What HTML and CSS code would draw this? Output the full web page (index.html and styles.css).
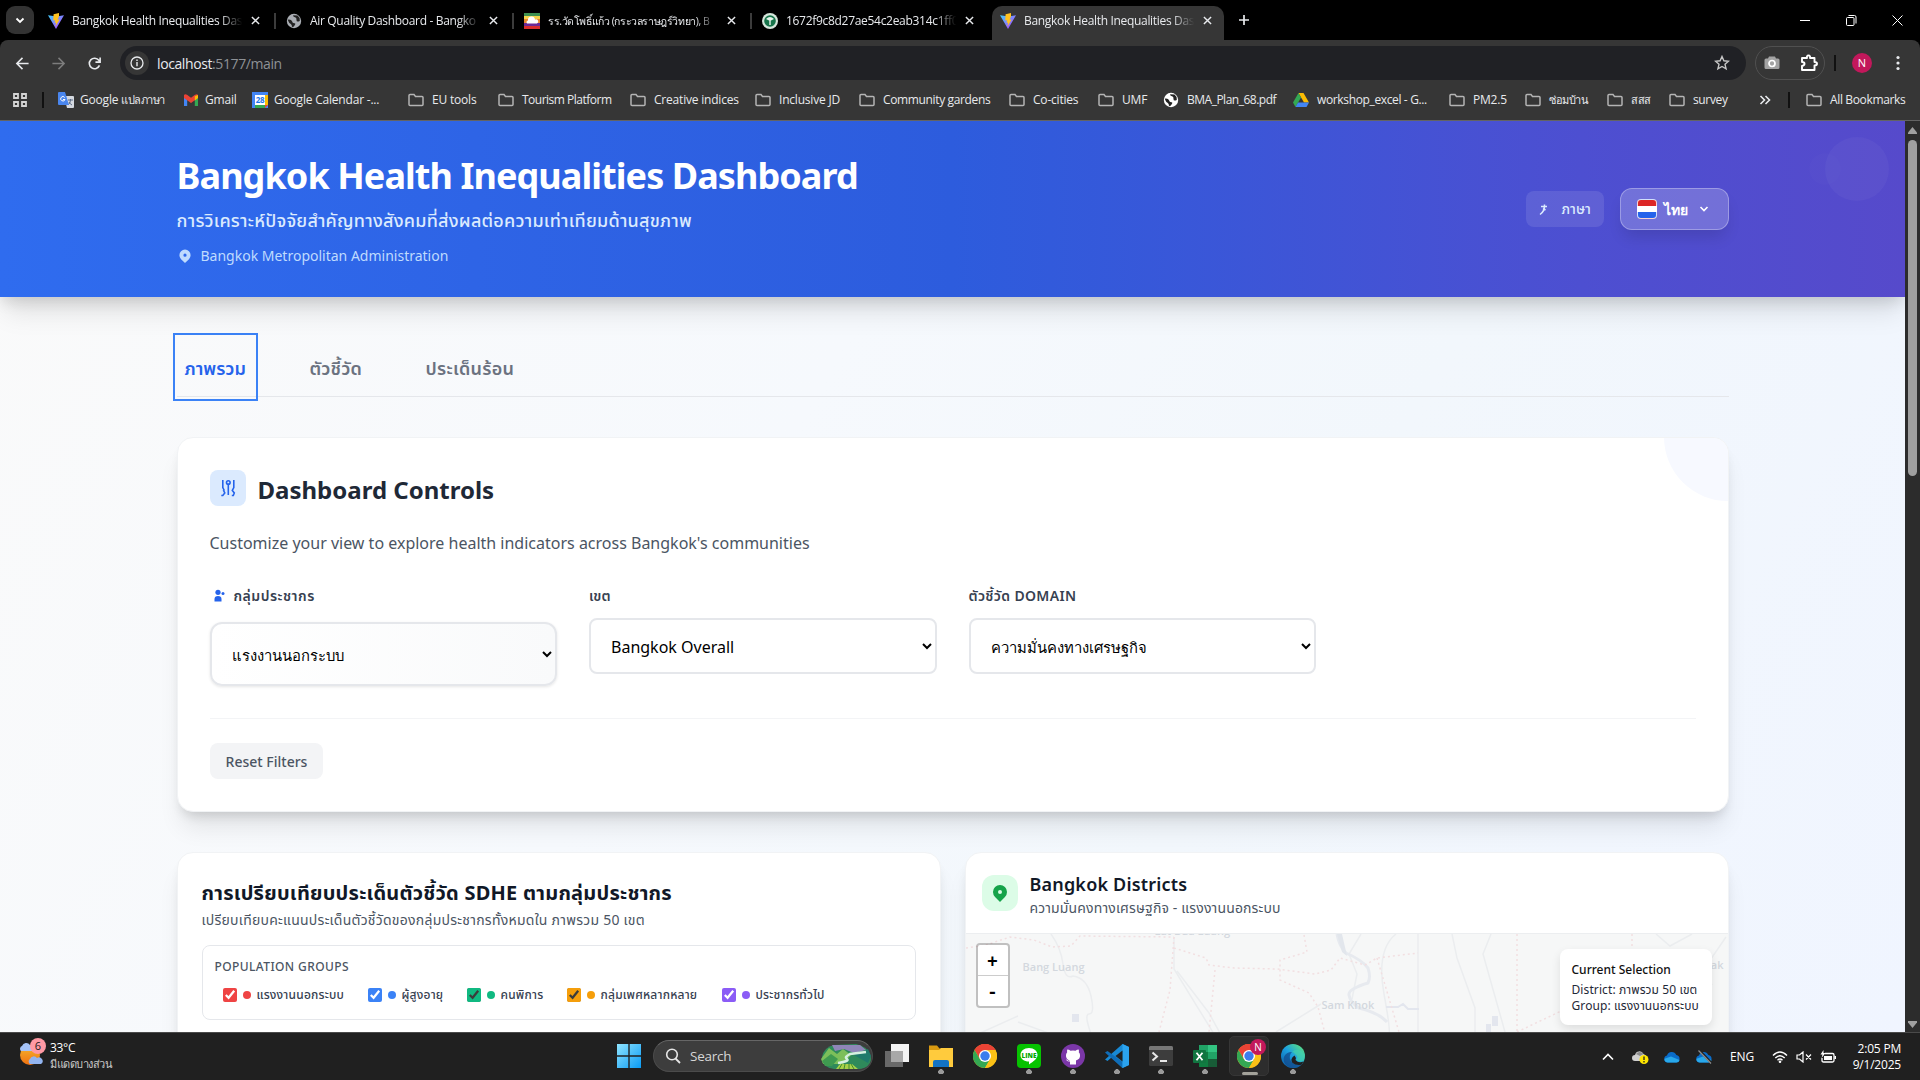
FILE: index.html
```html
<!DOCTYPE html>
<html lang="th">
<head>
<meta charset="utf-8">
<title>Bangkok Health Inequalities Dashboard</title>
<link rel="stylesheet" href="styles.css">
</head>
<body>
<svg class="defs" width="0" height="0">
  <defs>
    <linearGradient id="vite-a" x1="0" y1="0" x2="1" y2="1"><stop offset="0" stop-color="#41d1ff"/><stop offset="1" stop-color="#bd34fe"/></linearGradient>
    <linearGradient id="edge-a" x1="0" y1="1" x2="1" y2="0"><stop offset="0" stop-color="#0c59a4"/><stop offset=".5" stop-color="#1ba0e0"/><stop offset="1" stop-color="#66eb6e"/></linearGradient>
    <linearGradient id="win-a" x1="0" y1="0" x2="1" y2="1"><stop offset="0" stop-color="#8fe4ff"/><stop offset="1" stop-color="#0a9bf5"/></linearGradient>
    <linearGradient id="sun-a" x1="0" y1="0" x2="0" y2="1"><stop offset="0" stop-color="#f5b82e"/><stop offset="1" stop-color="#f07010"/></linearGradient>
    <symbol id="vite" viewBox="0 0 16 16"><path d="M0 2.2 8 16 16 2.2 8.5 3.6Z" fill="url(#vite-a)"/><path d="M11 0 5.6 1.2 5.2 7.6l2-.4-.6 2.8 1.5-.4L7.400 13.500l4.300-7.100-2.100.4L11 3.600Z" fill="#ffc21f"/></symbol>
    <symbol id="x" viewBox="0 0 10 10"><path d="M1 1l8 8M9 1 1 9" stroke="#e8eaed" stroke-width="1.6"/></symbol>
    <symbol id="folder" viewBox="0 0 16 16"><path d="M1 3.500Q1 2.500 2 2.500H6L7.500 4.500H14Q15 4.500 15 5.500V12.500Q15 13.500 14 13.500H2Q1 13.500 1 12.500Z" fill="none" stroke="#b4b4b4" stroke-width="1.500"/></symbol>
    <symbol id="globe" viewBox="0 0 16 16"><circle cx="8" cy="8" r="7.200" fill="currentColor"/><path d="M2.200 6.500Q5.500 6.200 6 8.300T8.500 10.200 7.600 13.800L6 14Q6 11.500 4.500 10.800T2 7.500ZM7 2.200Q7.300 4.200 9 4.300T10.500 7 13.800 8L13.600 5 11.500 2.600Z" fill="#222"/></symbol>
    <symbol id="chrome" viewBox="0 0 24 24"><circle cx="12" cy="12" r="12" fill="#fbc116"/><path d="M12 12 1.600 6A12 12 0 0 1 22.400 6Z" fill="#ea4335"/><path d="M12 6H22.400A12 12 0 0 0 1.600 6L6.800 15Z" fill="#ea4335"/><path d="M6.800 15 1.600 6A12 12 0 0 0 12 24L17.200 15Z" fill="#34a853"/><path d="M12 24A12 12 0 0 0 22.400 6H12l5.200 9Z" fill="#fbc116"/><circle cx="12" cy="12" r="6" fill="#fff"/><circle cx="12" cy="12" r="4.700" fill="#3b7ded"/></symbol>
    <symbol id="pin" viewBox="0 0 20 20"><path fill-rule="evenodd" d="M5.050 4.050a7 7 0 1 1 9.900 9.900L10 18.900l-4.950-4.950a7 7 0 0 1 0-9.900zM10 11a2 2 0 1 0 0-4 2 2 0 0 0 0 4z" fill="currentColor"/></symbol>
    <symbol id="cloud" viewBox="0 0 16 12"><path d="M3.500 11.500A3.500 3.500 0 0 1 3 4.600 5 5 0 0 1 12.300 4 3.800 3.800 0 0 1 12.500 11.500Z" fill="#0a6cc9"/><path d="M3.500 11.500Q0 11 .5 7.800L7 5.500 15.500 9Q15 11.500 12.500 11.500Z" fill="#28a8ea"/></symbol>
  </defs>
</svg>

<div class="tabstrip">
  <span class="tab-search"><svg width="10" height="10" viewBox="0 0 10 10"><path d="M1.500 3.500 5 7 8.500 3.500" fill="none" stroke="#fff" stroke-width="1.800"/></svg></span>
  <div class="tab first"><svg class="fav"><use href="#vite"/></svg><span class="tab-title">Bangkok Health Inequalities Das</span><svg class="close"><use href="#x"/></svg></div>
  <div class="tab"><svg class="fav grey"><use href="#globe"/></svg><span class="tab-title">Air Quality Dashboard - Bangko</span><svg class="close"><use href="#x"/></svg></div>
  <div class="tab"><svg class="fav" viewBox="0 0 16 16"><path fill="#3e9150" d="M0 0h16v3H0z"/><path fill="#f4d34b" d="M0 3h16v3H0z"/><path fill="#e9872f" d="M0 6h16v4H0z"/><path fill="#6d2a96" d="M0 10h16v3H0z"/><path fill="#d92e2e" d="M0 13h16v3H0z"/><path fill="#fff" d="M3 10.500a2 2 0 0 1 1-3 3.500 3.500 0 0 1 7-1 2.200 2.200 0 0 1 2 4z"/></svg><span class="tab-title thai-tab">รร.วัดโพธิ์แก้ว (กระวลราษฎร์วิทยา), B</span><svg class="close"><use href="#x"/></svg></div>
  <div class="tab last"><svg class="fav" viewBox="0 0 16 16"><circle cx="8" cy="8" r="8" fill="#d6e6dc"/><circle cx="8" cy="8" r="5.800" fill="#16744a"/><path d="M4 6q4-4 8 0L8 8zM7.300 7h1.400v5H7.300z" fill="#e8f4ec"/></svg><span class="tab-title hash">1672f9c8d27ae54c2eab314c1ff0</span><svg class="close"><use href="#x"/></svg></div>
  <div class="tab active"><svg class="fav"><use href="#vite"/></svg><span class="tab-title">Bangkok Health Inequalities Das</span><svg class="close"><use href="#x"/></svg></div>
  <svg class="newtab" width="12" height="12" viewBox="0 0 12 12"><path d="M6 1v10M1 6h10" stroke="#e8eaed" stroke-width="1.700"/></svg>
  <div class="winbtns">
    <svg width="11" height="11" viewBox="0 0 11 11"><path d="M0 5.500h10" stroke="#fff"/></svg>
    <svg width="11" height="11" viewBox="0 0 11 11"><path d="M.5 3.500q0-1 1-1H7q1 0 1 1V9.500q0 1-1 1H1.500q-1 0-1-1zM2.500 .5H8.500q1.500 0 1.500 1.500V8.500" fill="none" stroke="#fff"/></svg>
    <svg width="11" height="11" viewBox="0 0 11 11"><path d="M.5.5l10 10M10.500.5l-10 10" stroke="#fff"/></svg>
  </div>
</div>

<div class="toolbar">
  <svg class="nav" viewBox="0 0 16 16"><path d="M14.500 8H2M8 2 2 8l6 6" fill="none" stroke="#e8eaed" stroke-width="1.700"/></svg>
  <svg class="nav" viewBox="0 0 16 16"><path d="M1.500 8H14M8 2l6 6-6 6" fill="none" stroke="#7d7d7d" stroke-width="1.600"/></svg>
  <svg class="nav" viewBox="0 0 16 16"><path d="M13.300 10A5.600 5.600 0 1 1 12.600 4.600L14 6.200M14 1.500v5H9" fill="none" stroke="#e8eaed" stroke-width="1.700"/></svg>
  <div class="omnibox">
    <span class="info"><svg width="14" height="14" viewBox="0 0 14 14"><circle cx="7" cy="7" r="6" fill="none" stroke="#e8eaed" stroke-width="1.300"/><path d="M7 6v4.200M7 3.600v1.400" stroke="#e8eaed" stroke-width="1.400"/></svg></span>
    <span class="url">localhost<em>:5177/main</em></span>
    <svg class="star" width="16" height="16" viewBox="0 0 16 16"><path d="M8 1.500l1.900 4.300 4.600.4-3.500 3.100 1.100 4.600L8 11.500l-4.100 2.400L5 9.300 1.500 6.200l4.600-.4z" fill="none" stroke="#c7c7c7" stroke-width="1.400"/></svg>
  </div>
  <div class="extpill">
    <svg width="16" height="16" viewBox="0 0 16 16"><path d="M5 1.500h6l1 2h2q1.500 0 1.500 1.500v7.500q0 1.500-1.500 1.500H2Q.5 14 .5 12.500V5Q.5 3.500 2 3.500h2z" fill="#a3a3a3"/><circle cx="8" cy="8.500" r="3" fill="none" stroke="#fff" stroke-width="1.700"/></svg>
    <svg width="18" height="18" viewBox="0 0 18 18"><path d="M2 4h5Q6.500 1.500 8.500 1.500T10 4h4.500V8Q17 8 17 9.700T14.500 11.500V16H2V12Q4.500 11.500 4.500 9.800T2 8z" fill="none" stroke="#fff" stroke-width="1.900" stroke-linejoin="round"/></svg>
  </div>
  <i class="bar"></i>
  <span class="avatar">N</span>
  <svg class="dots" width="4" height="16" viewBox="0 0 4 16"><circle cx="2" cy="2.500" r="1.600"/><circle cx="2" cy="8" r="1.600"/><circle cx="2" cy="13.500" r="1.600"/></svg>
</div>

<div class="bookmarks">
  <svg class="apps" width="14" height="14" viewBox="0 0 14 14"><path d="M1 1h4v4H1zM9 1h4v4H9zM1 9h4v4H1zM9 9h4v4H9z" fill="none" stroke="#d5d5d5" stroke-width="1.800"/></svg>
  <i class="bar"></i>
  <span class="bm"><svg viewBox="0 0 16 16"><path d="M6 4h9q1 0 1 1v10q0 1-1 1H9z" fill="#d5d9e0"/><path d="M10 8h5M12.500 7v1q0 3-2.500 5M11 10q1 2 3 3" stroke="#5a6a85" fill="none"/><path d="M1 0h6l4 13H1q-1 0-1-1V1q0-1 1-1z" fill="#4a86ee"/><path d="M6.700 5.500A2.200 2.200 0 1 0 7 7.500H5" fill="none" stroke="#fff"/></svg><span class="bt">Google <span class="thai-bm">แปลภาษา</span></span></span>
  <span class="bm"><svg viewBox="0 0 16 16"><path d="M1 3.500h3.200V14H1z" fill="#4285f4"/><path d="M11.800 3.500H15V14h-3.200z" fill="#34a853"/><path d="M1 3q1-1.500 3-.2l4 3 4-3Q14 1.500 15 3v3L8 11 1 6z" fill="#ea4335"/><path d="M11.800 4.200 15 3v3l-3.200 2.400z" fill="#fbbc04"/></svg><span class="bt">Gmail</span></span>
  <span class="bm"><svg viewBox="0 0 16 16"><path d="M0 0h16v16H0z" fill="#4285f4"/><path d="M13 3h3v10h-3z" fill="#fbbc04"/><path d="M3 13h10v3H3z" fill="#34a853"/><path d="M13 13h3l-3 3z" fill="#ea4335"/><path d="M3 3h10v10H3z" fill="#fff"/><text x="8" y="11" font-size="8" text-anchor="middle" fill="#1a73e8" font-weight="700">28</text></svg><span class="bt">Google Calendar -...</span></span>
  <span class="bm"><svg><use href="#folder"/></svg><span class="bt">EU tools</span></span>
  <span class="bm"><svg><use href="#folder"/></svg><span class="bt tight">Tourism Platform</span></span>
  <span class="bm"><svg><use href="#folder"/></svg><span class="bt">Creative indices</span></span>
  <span class="bm"><svg><use href="#folder"/></svg><span class="bt">Inclusive JD</span></span>
  <span class="bm"><svg><use href="#folder"/></svg><span class="bt snug">Community gardens</span></span>
  <span class="bm"><svg><use href="#folder"/></svg><span class="bt">Co-cities</span></span>
  <span class="bm"><svg><use href="#folder"/></svg><span class="bt">UMF</span></span>
  <span class="bm"><svg class="white"><use href="#globe"/></svg><span class="bt tight">BMA_Plan_68.pdf</span></span>
  <span class="bm"><svg viewBox="0 0 16 16"><path d="M5.500 1h5L16 10.500h-5z" fill="#fbbc04"/><path d="M5.500 1 8 5.500 2.500 15 0 10.500z" fill="#34a853"/><path d="M5 10.500h11L13.500 15h-11z" fill="#4285f4"/></svg><span class="bt snug">workshop_excel - G...</span></span>
  <span class="bm"><svg><use href="#folder"/></svg><span class="bt">PM2.5</span></span>
  <span class="bm"><svg><use href="#folder"/></svg><span class="bt thai-bm">ซ่อมบ้าน</span></span>
  <span class="bm"><svg><use href="#folder"/></svg><span class="bt thai-bm">สสส</span></span>
  <span class="bm"><svg><use href="#folder"/></svg><span class="bt snug">survey</span></span>
  <svg class="more" width="12" height="10" viewBox="0 0 12 10"><path d="M1.500 1l4 4-4 4M6.500 1l4 4-4 4" fill="none" stroke="#e8eaed" stroke-width="1.600"/></svg>
  <i class="bar"></i>
  <span class="bm"><svg><use href="#folder"/></svg><span class="bt snug">All Bookmarks</span></span>
</div>

<div class="viewport">
  <div class="page">
    <header class="hero">
      <i class="orb big"></i><i class="orb small"></i>
      <div class="container hero-in">
        <div>
          <h1>Bangkok Health Inequalities Dashboard</h1>
          <p class="tagline">การวิเคราะห์ปัจจัยสำคัญทางสังคมที่ส่งผลต่อความเท่าเทียมด้านสุขภาพ</p>
          <p class="org"><svg width="16" height="16"><use href="#pin"/></svg>Bangkok Metropolitan Administration</p>
        </div>
        <div class="lang">
          <span class="lang-label"><svg width="16" height="16" viewBox="0 0 16 16"><path d="M5 4.500h6M8.500 2.500Q9 9 4 12.500M7 6.500l2.500 1.500" fill="none" stroke="currentColor" stroke-width="1.500"/></svg><span>ภาษา</span></span>
          <button class="lang-btn"><i class="flag"></i><span class="t-thai">ไทย</span><svg width="10" height="8" viewBox="0 0 10 8"><path d="M1.500 2 5 5.500 8.500 2" fill="none" stroke="#fff" stroke-width="1.600"/></svg></button>
        </div>
      </div>
    </header>

    <main class="container">
      <nav class="tabs">
        <a class="on">ภาพรวม</a><a>ตัวชี้วัด</a><a>ประเด็นร้อน</a>
      </nav>

      <section class="card controls">
        <i class="corner"></i>
        <div class="controls-head">
          <span class="badge blue"><svg width="20" height="20" viewBox="0 0 20 20"><g fill="none" stroke="#2563eb" stroke-width="1.600"><path d="M4.500 2v7.500l1.500 3M3 17.500h1.500l2-2.500-1.500-3M10 5.500V17M15.500 2v7.500l-1.500 3 2 2.500-1 2.500h-1.500" transform="translate(.3 0)"/><circle cx="10.300" cy="4.500" r="1.800"/></g></svg></span>
          <h2>Dashboard Controls</h2>
        </div>
        <p class="lead">Customize your view to explore health indicators across Bangkok's communities</p>
        <div class="fields">
          <div class="field">
            <label class="with-icon"><svg width="16" height="16" viewBox="0 0 16 16"><path d="M4.500 13.500V11q0-3 3.500-3t3.500 3v2.500z" fill="#2563eb"/><circle cx="8" cy="4.300" r="2.600" fill="#2563eb"/><circle cx="13" cy="5.500" r="1.500" fill="#2563eb"/></svg><span class="group-label">กลุ่มประชากร</span></label>
            <select class="tall thai"><option>แรงงานนอกระบบ</option></select>
          </div>
          <div class="field"><label>เขต</label><select><option>Bangkok Overall</option></select></div>
          <div class="field"><label class="domain">ตัวชี้วัด DOMAIN</label><select class="thai"><option>ความมั่นคงทางเศรษฐกิจ</option></select></div>
        </div>
        <div class="controls-foot"><button class="reset">Reset Filters</button></div>
      </section>

      <div class="duo">
        <section class="card compare">
          <h3>การเปรียบเทียบประเด็นตัวชี้วัด SDHE ตามกลุ่มประชากร</h3>
          <p class="sub">เปรียบเทียบคะแนนประเด็นตัวชี้วัดของกลุ่มประชากรทั้งหมดใน ภาพรวม 50 เขต</p>
          <div class="groups">
            <h4>POPULATION GROUPS</h4>
            <div class="checks">
              <label class="c-red"><input type="checkbox" checked><i></i><span>แรงงานนอกระบบ</span></label>
              <label class="c-blue"><input type="checkbox" checked><i></i><span>ผู้สูงอายุ</span></label>
              <label class="c-green"><input type="checkbox" checked><i></i><span>คนพิการ</span></label>
              <label class="c-amber"><input type="checkbox" checked><i></i><span>กลุ่มเพศหลากหลาย</span></label>
              <label class="c-violet"><input type="checkbox" checked><i></i><span>ประชากรทั่วไป</span></label>
            </div>
          </div>
        </section>

        <section class="card districts">
          <div class="districts-head">
            <span class="badge green"><svg width="20" height="20"><use href="#pin"/></svg></span>
            <div><h3>Bangkok Districts</h3><p>ความมั่นคงทางเศรษฐกิจ - แรงงานนอกระบบ</p></div>
          </div>
          <div class="map">
            <svg class="tiles" width="762" height="300" viewBox="0 0 762 300">
              <g fill="none" stroke="#ebedef" stroke-width="1.500">
                <path d="M85 0q10 14 12 30t10 12q14 2 18 20t-2 18 5 28M211 37l32 42 12 22M208 3v32l40 65M310 98l45-28M52 88l55 20M12 100l40-18M395 0l-12 20 8 20-5 25M430 0q-20 16-12 60t4 40M452 0v100M486 0l5 24 18 50v24M525 0l-8 20 22 78M690 0l14 12 22-12M760 3l-22 32 8 16"/>
              </g>
              <path d="M371 0q2 12 9 19 16 7 22 15 3 9 0 15-20 6-19 12 1 7 10 13 20 5 28 14" fill="none" stroke="#e7eaef" stroke-width="3"/>
              <path d="M371 0l5 0 5 22-5-4z" fill="#e2e6ec"/>
              <path d="M420 73h12l5-3 5 5h11" fill="none" stroke="#e3e6ee" stroke-width="2"/>
              <path d="M526 82h6v10h-6zM520 90h5v8h-5zM106 80h7v8h-7z" fill="#e3e6ee"/>
              <g fill="none" stroke="#f2dfe1" stroke-width="1.500" stroke-dasharray="2 3">
                <path d="M0 14l20-3 24-8 24 3 18 7 19-1 9-10 94 1M208 14l32 10 3 7 25 3 43 1 38 5 16-4 9-12 25 7 12-7 41-5M208 3l-4 53-11 42M338 1l3 17-27 8v20l29 13 9 14 8 30M249 36l-6 62M411 24l22 74M551 0v98M666 0v20M551 98l42-20 60-8"/>
              </g>
            </svg>
            <span class="place p1">Lat Bua Luang</span><span class="place p2">Bang Luang</span><span class="place p3">Sam Khok</span><span class="place p4">ak</span>
            <div class="zoom"><b>+</b><b>-</b></div>
            <div class="selection"><strong>Current Selection</strong><span>District: ภาพรวม 50 เขต</span><span>Group: แรงงานนอกระบบ</span></div>
          </div>
        </section>
      </div>
    </main>
  </div>
  <div class="scrollbar">
    <svg width="9" height="7" viewBox="0 0 9 7"><path d="M4.500 0 9 5.500V7H0V5.500Z" fill="#9f9f9f"/></svg>
    <i></i>
    <svg class="down" width="9" height="7" viewBox="0 0 9 7"><path d="M4.500 7 9 1.500V0H0V1.500Z" fill="#9f9f9f"/></svg>
  </div>
</div>

<footer class="taskbar">
  <div class="weather">
    <span class="wx"><svg width="26" height="30" viewBox="0 0 26 30"><circle cx="12" cy="17" r="10" fill="url(#sun-a)"/><path d="M3 13a3 3 0 0 1 1-5 4.500 4.500 0 0 1 8-1 4 4 0 0 1 3 6z" fill="#a5c3f7"/><path d="M12 26a3 3 0 0 1 0-5 4 4 0 0 1 7-1 3.500 3.500 0 0 1 4 6z" fill="#92b4f0"/></svg><b>6</b></span>
    <div><p>33°C</p><p class="cond">มีแดดบางส่วน</p></div>
  </div>
  <div class="apps-row">
    <svg class="app" viewBox="0 0 24 24"><path d="M0 0h11.300v11.300H0zM12.700 0H24v11.300H12.700zM0 12.700h11.300V24H0zM12.700 12.700H24V24H12.700z" fill="url(#win-a)"/></svg>
    <div class="search"><svg width="16" height="16" viewBox="0 0 16 16"><circle cx="7" cy="6.500" r="5.300" fill="none" stroke="#e6e6e6" stroke-width="1.600"/><path d="M10.500 10.500 15 15" stroke="#e6e6e6" stroke-width="1.800"/></svg><span>Search</span>
      <svg class="art" width="52" height="26" viewBox="0 0 52 26"><path d="M2 14Q4 4 14 2l22-1q10 2 14 10 2 4 0 10-2 4-8 5H14Q3 25 2 14z" fill="#2f8a5b"/><path d="M12 2h28l6 5-12 3-10-4-9 2z" fill="#8f86b8"/><path d="M1 16 9 5l8 6 6-5 8 6-8 9H3z" fill="#7cbf5a"/><path d="M2 18l9-7 7 5-6 7H5z" fill="#3f9a50"/><path d="M48 6 34 12l14 8 3-7z" fill="#1f7a6b"/><path d="M46 9 30 11q-6 3-3 5t-9 4" fill="none" stroke="#d5f0e0" stroke-width="2.500"/><path d="M16 26l4-5h12l6 5z" fill="#a8d14a"/><path d="M19 26l3-5M24 26l1-5M29 26v-5M34 26l-3-5" stroke="#3f8a2f"/></svg>
    </div>
    <svg class="app" viewBox="0 0 24 24"><path d="M6 0h18v18H6z" fill="#f2f2f2"/><path d="M0 7h18v16H0z" fill="#777" opacity=".85"/><path d="M6 7h12v11H6z" fill="#a8a8a8"/></svg>
    <svg class="app run" viewBox="0 0 24 24"><path d="M0 1.500h8l2.500 3H24V8H0z" fill="#d99a11"/><path d="M0 6h10l2-2h12v19H0z" fill="#ffcb3d"/><path d="M4 23v-5q0-2 2-2h12q2 0 2 2v5z" fill="#1373c4"/></svg>
    <svg class="app" viewBox="0 0 24 24"><use href="#chrome"/></svg>
    <svg class="app run" viewBox="0 0 24 24"><rect width="24" height="24" rx="4" fill="#06c300"/><path d="M12 4c5 0 8.500 3 8.500 7 0 3.500-4 6.500-8.500 9.500v-3C7 17.500 3.500 15 3.500 11S7 4 12 4z" fill="#fff"/><text x="12" y="13.500" text-anchor="middle" font-size="6.500" font-weight="800" fill="#06a800">LINE</text></svg>
    <svg class="app run" viewBox="0 0 24 24"><circle cx="12" cy="12" r="12" fill="#7b37a8"/><path d="M9 20.500v-3q-3 .6-4-2 1.500 0 2 1.200H9Q4.500 15 5 11q.2-1.500 1.200-2.700Q5.800 7 6.300 5.500 8 5.600 9.500 6.700q2.500-.6 5 0Q16 5.600 17.700 5.500q.5 1.500.1 2.800Q19 9.500 19 11q.5 4-4 5.500v4z" fill="#fff"/></svg>
    <svg class="app run" viewBox="0 0 24 24"><path d="M17.500 0 24 3v18l-6.500 3L6.500 13.500 2.500 17 0 15.500 17.500 0z" fill="#1889d4"/><path d="M17.500 24 0 8.500 2.500 7 17.500 18z" fill="#0f6db8"/><path d="M17.500 0 24 3v18l-6.500 3z" fill="#2ba3ef"/><path d="M17.500 6.500v11L10.500 12z" fill="#202020"/></svg>
    <svg class="app run" viewBox="0 0 24 24"><rect y="2" width="24" height="20" rx="1.500" fill="#3d3d3d"/><path d="M0 3.500Q0 2 1.500 2h21Q24 2 24 3.500V6H0z" fill="#777"/><path d="M3.500 8.500 8 12.500l-4.500 4M11 17h7" fill="none" stroke="#e8e8e8" stroke-width="2"/></svg>
    <svg class="app run" viewBox="0 0 24 24"><path d="M6 1h18v22H6z" fill="#21a366"/><path d="M15 1h9v7h-9z" fill="#33c481"/><path d="M6 8h9v7H6zM15 15h9v8H6v-8z" fill="#107c41"/><path d="M15 15h9v8H15z" fill="#185c37"/><rect y="6" width="13" height="13" rx="1" fill="#117540"/><path d="M3.500 8.800l6 7.400M9.500 8.800l-6 7.400" stroke="#fff" stroke-width="1.800"/></svg>
    <span class="app-active"><svg class="app" viewBox="0 0 24 24"><use href="#chrome"/></svg><b>N</b></span>
    <svg class="app run" viewBox="0 0 24 24"><circle cx="12" cy="12" r="12" fill="url(#edge-a)"/><path d="M11 24C5 23 1.500 18 3 13q2-5 8-5-3 3-2 7 1.500 5 8 5.500 3 0 4.500-1Q18 24 11 24z" fill="#114a8b" opacity=".75"/><path d="M14 10q4 2 1 6 4 3 8 0 2-6-3-9-5-3-9 1 2 0 3 2z" fill="#45d6a8" opacity=".6"/><path d="M13.500 11.500q2 2 1 4.500 3 3.500 8 1.500l-2 3.200q-5 1.300-9-1.700-3-4 2-7.500z" fill="#202020"/></svg>
  </div>
  <div class="tray">
    <svg width="12" height="8" viewBox="0 0 12 8"><path d="M1 6.500 6 1.500l5 5" fill="none" stroke="#fff" stroke-width="1.600"/></svg>
    <svg width="17" height="14" viewBox="0 0 17 14"><path d="M3 11a3 3 0 0 1 0-6 4.500 4.500 0 0 1 8.500-1q3 1 3 4t-3 3z" fill="#d0d0d0"/><path d="M4 4a4.500 4.500 0 0 1 7.500 0L8 6z" fill="#8b8b8b"/><circle cx="12" cy="9.500" r="4.500" fill="#ffe600"/><path d="M12 6.500v3.500M12 11v1.500" stroke="#222" stroke-width="1.300"/></svg>
    <svg width="16" height="12"><use href="#cloud"/></svg>
    <svg width="17" height="14" viewBox="0 0 17 14"><use href="#cloud" width="16" height="12" y="1"/><path d="M3 0l12.500 13" stroke="#202020" stroke-width="2.500"/><path d="M2.500.5 15 13.500" stroke="#8f8f8f" stroke-width="1.200"/></svg>
    <span class="eng">ENG</span>
    <svg class="wifi" width="16" height="12" viewBox="0 0 16 12"><g fill="none" stroke="#fff" stroke-width="1.400"><path d="M1 4.500q7-7 14 0M3.300 7q4.700-4.600 9.400 0M5.500 9.300q2.500-2.500 5 0"/></g><circle cx="8" cy="10.700" r="1.300" fill="#fff"/></svg>
    <svg width="16" height="12" viewBox="0 0 16 12"><path d="M1 4h2.500L7 1v10L3.500 8H1zM10 3.500l5 5M15 3.500l-5 5" fill="none" stroke="#fff" stroke-width="1.200"/></svg>
    <svg width="16" height="14" viewBox="0 0 16 14"><path d="M5 3.500h7.500Q14 3.500 14 5v5.500Q14 12 12.500 12h-9Q2 12 2 10.500V8" fill="none" stroke="#fff" stroke-width="1.300"/><path d="M4 6h8v4H4zM14.500 6h1.500v3h-1.500z" fill="#fff"/><path d="M3.500 0 .5 4.500H2.500L1.500 8l4-5H3.500z" fill="#fff"/></svg>
    <div class="clock"><p>2:05 PM</p><p>9/1/2025</p></div>
  </div>
</footer>
</body>
</html>
```

FILE: styles.css
```css
* { box-sizing: border-box; }
body {
  margin: 0; width: 1920px; height: 1080px; overflow: hidden;
  display: flex; flex-direction: column; background: #000;
  font-family: "Noto Sans", "Noto Sans Thai", "Open Sans", sans-serif;
}
h1, h2, h3, h4, p { margin: 0; }
svg { display: block; flex: none; }
.defs { position: absolute; }
i { font-style: normal; }

/* ---- browser tabs ---- */
.tabstrip { height: 40px; flex: none; display: flex; align-items: center; color: #e8eaed; font: 12px "Open Sans", sans-serif; padding-left: 6px; }
.tab-search { width: 28px; height: 28px; border-radius: 9px; background: #333; display: grid; place-items: center; }
.tab { flex: none; width: 238px; height: 34px; display: flex; align-items: center; padding: 1px 0 0 10px; position: relative; }
.tab::after { content: ""; position: absolute; right: 0; top: 10px; width: 2px; height: 16px; background: #3c3c3c; }
.tab.first { margin-left: 10px; width: 232px; padding-left: 4px; }
.tab.last::after, .tab.active::after { display: none; }
.tab.last { width: 236px; }
.tab.active { width: 232px; margin: 6px 14px 0 4px; padding: 0 0 5px 8px; background: #363636; border-radius: 10px 10px 0 0; }
.fav { width: 16px; height: 16px; }
.fav.grey { color: #a9adb3; }
.tab-title { width: 172px; margin-left: 8px; white-space: nowrap; overflow: hidden; letter-spacing: -.32px; line-height: 20px;
  -webkit-mask-image: linear-gradient(90deg, #000 86%, transparent 99%); mask-image: linear-gradient(90deg, #000 86%, transparent 99%); }
.thai-tab { font-size: 10.5px; letter-spacing: -.4px; }
.hash { letter-spacing: -.3px; }
.close { width: 9px; height: 9px; margin-left: 7px; }
.winbtns { margin-left: auto; display: flex; gap: 35px; padding-right: 17px; }

/* ---- toolbar ---- */
.toolbar { height: 46px; flex: none; display: flex; align-items: center; background: #363636; border-radius: 8px 8px 0 0; padding-left: 15px; }
.nav { width: 15px; height: 15px; margin-right: 21px; }
.omnibox { width: 1626px; height: 34px; border-radius: 17px; background: #202125; display: flex; align-items: center; margin-left: -3px; padding: 0 16px 0 5px; flex: none; }
.info { width: 24px; height: 24px; border-radius: 50%; background: #363636; display: grid; place-items: center; }
.url { font: 14px "Open Sans", sans-serif; color: #e8eaed; margin-left: 8px; letter-spacing: -.4px; }
.url em { font-style: normal; color: #8e9196; }
.star { margin-left: auto; }
.extpill { width: 70px; height: 34px; border: 1px solid #505050; border-radius: 17px; margin-left: 9px; display: flex; align-items: center; justify-content: space-between; padding: 0 6px 0 8px; flex: none; }
.bar { width: 2px; height: 16px; background: #111; display: block; }
.toolbar .bar { margin-left: 9px; }
.avatar { width: 20px; height: 20px; border-radius: 50%; background: #c2185b; color: #fff; font: 11px/20px "Open Sans", sans-serif; text-align: center; margin-left: 16px; }
.dots { fill: #e8eaed; margin-left: 24px; }

/* ---- bookmarks ---- */
.bookmarks { height: 35px; flex: none; display: grid; align-items: center; background: #363636; border-bottom: 1px solid #636363; padding: 0 0 7px 13px;
  grid-template-columns: 29px 16px 125px 69px 156px 90px 132px 125px 104px 150px 89px 65px 130px 156px 76px 82px 62px 90px 29px 18px 110px; }
.bm { display: flex; align-items: center; gap: 8px; color: #e8eaed; font: 12px/18px "Open Sans", sans-serif; letter-spacing: -.2px; white-space: nowrap; }
.bm svg { width: 16px; height: 16px; }
.bm .white { color: #fff; }
.bm:nth-of-type(-n+3) { gap: 6px; }
.tight { letter-spacing: -.5px; }
.snug { letter-spacing: -.36px; }
.thai-bm { font-size: 11px; letter-spacing: -.5px; }

/* ---- page ---- */
.viewport { flex: 1; min-height: 0; display: flex; }
.page { width: 1905px; overflow: hidden; background: linear-gradient(120deg, #fafafa 0%, #f6f9fd 40%, #f2f7fc 65%, #f0f5ff 100%); }
.container { width: 1600px; margin: 0 auto; padding: 0 24px; }
.hero { height: 176px; position: relative; color: #fff; background: linear-gradient(90deg, #2f6cef 0%, #2d5cdd 50%, #4d4fd1 83%, #564acb 100%); box-shadow: 0 20px 25px -5px rgba(0,0,0,.1), 0 6px 14px -2px rgba(0,0,0,.13); }
.orb { position: absolute; border-radius: 50%; background: rgba(255,255,255,.035); }
.orb.big { width: 64px; height: 64px; right: 16px; top: 16px; }
.orb.small { width: 32px; height: 32px; right: 64px; top: 32px; background: rgba(255,255,255,.012); }
.hero-in { height: 100%; display: flex; justify-content: space-between; align-items: center; }
h1 { font-size: 36px; line-height: 40px; font-weight: 700; letter-spacing: -.93px; margin-top: 4px; }
.tagline { font-size: 18px; line-height: 28px; font-weight: 500; color: #dbeafe; margin-top: 10px; letter-spacing: .24px; white-space: nowrap; }
.org { display: flex; align-items: center; gap: 8px; font-size: 14px; line-height: 20px; color: #bfdbfe; margin-top: 12px; }
.lang { display: flex; align-items: center; gap: 16px; }
.lang-label { width: 78px; height: 36px; border-radius: 8px; background: rgba(255,255,255,.1); color: #dbeafe; display: flex; align-items: center; gap: 10px; padding: 1px 0 0 10px; font-size: 14px; font-weight: 500; white-space: nowrap; }
.lang-btn { width: 109px; height: 42px; border: 1px solid rgba(255,255,255,.3); border-radius: 12px; background: rgba(255,255,255,.2); color: #fff; font: 600 14px "Noto Sans", sans-serif; display: flex; align-items: center; padding: 0 0 0 16px; box-shadow: 0 10px 15px -3px rgba(0,0,0,.12); }
.flag { width: 20px; height: 20px; border: 1px solid rgba(255,255,255,.8); border-radius: 4px; background: linear-gradient(#dc2626 33%, #fff 33% 66%, #2563eb 66%); margin-right: 7px; }
.t-thai { width: 25px; padding-top: 1px; white-space: nowrap; }
.lang-btn svg { margin-left: 10px; }

.tabs { height: 60px; margin-top: 40px; border-bottom: 1px solid #e5e7eb; display: flex; gap: 48px; }
.tabs a { height: 60px; padding: 0 8px; font-size: 18px; line-height: 62px; font-weight: 600; color: #6b7280; white-space: nowrap; }
.tabs .on { color: #2563eb; outline: 2px solid #3b82f6; outline-offset: 2px; width: 77px; }
.tabs a:nth-child(2) { width: 68px; letter-spacing: .15px; }
.tabs a:nth-child(3) { letter-spacing: .3px; }

.card { background: #fff; border: 1px solid #f1f3f5; border-radius: 16px; box-shadow: 0 20px 25px -5px rgba(0,0,0,.09), 0 8px 12px -5px rgba(0,0,0,.14); }
.controls { margin-top: 40px; height: 375px; padding: 32px 32px 0; position: relative; overflow: hidden; }
.corner { position: absolute; width: 128px; height: 128px; right: -64px; top: -65px; border-radius: 50%; background: #f7f9ff; }
.controls-head { display: flex; gap: 12px; height: 44px; }
.badge { width: 36px; height: 36px; display: grid; place-items: center; flex: none; }
.badge.blue { background: #dbeafe; border-radius: 8px; }
.badge.green { background: #dcfce7; border-radius: 12px; color: #16a34a; }
h2 { font-size: 24px; line-height: 32px; color: #1f2937; padding-top: 4px; }
.lead { font-size: 16px; line-height: 26px; color: #4b5563; padding-top: 16px; }
.fields { display: grid; grid-template-columns: repeat(4, 1fr); gap: 32px; margin-top: 30px; }
.field label { display: flex; align-items: center; height: 20px; font-size: 14px; font-weight: 600; color: #374151; letter-spacing: .1px; white-space: nowrap; }
.field .with-icon { gap: 8px; }
.group-label { letter-spacing: .5px; }
.field .domain { letter-spacing: .35px; }
.field select { display: block; width: 100%; height: 56px; margin-top: 12px; border: 2px solid #e5e7eb; border-radius: 8px; background: #fff; color: #000; padding: 2px 16px 0; font: 16px "Noto Sans", sans-serif; }
.field select.thai { font-size: 14.8px; }
.field select.tall { height: 64px; margin-top: 16px; border-radius: 12px; background: linear-gradient(90deg, #fff, #f9fafb); font-weight: 500; box-shadow: 0 1px 3px rgba(0,0,0,.1); }
.controls-foot { border-top: 1px solid #f3f4f6; margin-top: 32px; padding-top: 24px; }
.reset { width: 113px; height: 36px; border: 0; border-radius: 8px; background: #f3f4f6; color: #4b5563; font: 500 14px "Noto Sans", sans-serif; padding: 0 0 0 1px; display: block; white-space: nowrap; }

.duo { display: grid; grid-template-columns: 1fr 1fr; gap: 24px; margin-top: 40px; }
.duo .card { height: 400px; overflow: hidden; }
.compare { padding: 24px; }
.compare h3 { font-size: 20px; line-height: 32px; font-weight: 700; color: #111827; letter-spacing: .24px; white-space: nowrap; }
.sub { font-size: 14px; line-height: 20px; color: #4b5563; margin-top: 1px; letter-spacing: .25px; white-space: nowrap; }
.groups { margin-top: 15px; height: 75px; border: 1px solid #e5e7eb; border-radius: 8px; padding: 11px 12px; }
h4 { font-size: 12px; line-height: 20px; font-weight: 500; color: #4b5563; letter-spacing: .4px; }
.checks { display: flex; margin-top: 8px; padding-left: 8px; }
.checks label { display: flex; align-items: center; height: 20px; font-size: 12px; font-weight: 500; color: #374151; letter-spacing: .2px; white-space: nowrap; }
.checks input { width: 14px; height: 14px; margin: 0 6px 0 0; accent-color: var(--c); }
.checks i { width: 8px; height: 8px; border-radius: 50%; background: var(--c); margin-right: 6px; }
.c-red { --c: #ef4444; width: 145px; }
.c-blue { --c: #3b82f6; width: 99px; }
.c-green { --c: #10b981; width: 100px; }
.c-amber { --c: #f59e0b; width: 155px; }
.c-violet { --c: #8b5cf6; }

.districts-head { height: 81px; display: flex; gap: 12px; padding: 22px 0 0 16px; border-bottom: 1px solid #eceef0; }
.districts-head h3 { font-size: 18px; line-height: 22px; font-weight: 600; color: #111827; margin-top: -2px; letter-spacing: .18px; }
.districts-head p { font-size: 14px; line-height: 20px; color: #4b5563; margin-top: 3px; letter-spacing: .15px; white-space: nowrap; }
.map { height: 300px; position: relative; background: #f6f7f7; overflow: hidden; }
.tiles { position: absolute; left: 0; top: 0; }
.place { position: absolute; font: 600 11px/14px "Open Sans", sans-serif; color: #d3d8de; white-space: nowrap; }
.p1 { left: 189px; top: -10px; }
.p2 { left: 57px; top: 26px; }
.p3 { left: 356px; top: 64px; }
.p4 { right: 4px; top: 24px; }
.zoom { position: absolute; left: 10px; top: 9px; width: 34px; height: 65px; border: 2px solid rgba(0,0,0,.22); border-radius: 4px; background: #fff; background-clip: padding-box; }
.zoom b { display: block; height: 30px; font: bold 18px/35px "Liberation Mono", monospace; text-align: center; color: #000; }
.zoom b + b { border-top: 1px solid #ccc; }
.selection { position: absolute; right: 16px; top: 15px; width: 152px; height: 76px; background: #fff; border-radius: 8px; padding: 12px 0 0 12px; box-shadow: 0 4px 10px rgba(0,0,0,.1); font-size: 12px; line-height: 16px; color: #1f2937; display: flex; flex-direction: column; letter-spacing: .1px; white-space: nowrap; }
.selection strong { font-weight: 500; line-height: 17px; margin-bottom: 4px; color: #111; letter-spacing: 0; }

.scrollbar { width: 15px; background: #2c2c2c; display: flex; flex-direction: column; align-items: center; padding: 6px 0 4px; }
.scrollbar i { width: 9px; height: 336px; border-radius: 5px; background: #9f9f9f; margin-top: 6px; }
.scrollbar .down { margin-top: auto; }

/* ---- taskbar ---- */
.taskbar { height: 48px; flex: none; background: #202020; border-top: 1px solid #4a4a4a; display: flex; color: #fff; font: 12px "Open Sans", sans-serif; }
.weather { width: 617px; display: flex; padding: 5px 0 0 18px; }
.wx { position: relative; width: 32px; }
.wx b { position: absolute; left: 12px; top: 0; width: 16px; height: 16px; border-radius: 50%; background: #ff99a4; color: #1b1b1b; font: 11px/16px "Open Sans", sans-serif; text-align: center; }
.weather p { line-height: 16px; margin-top: 2px; letter-spacing: -.3px; }
.weather .cond { margin-top: 0; font-size: 11px; letter-spacing: -.45px; color: #c9c9c9; white-space: nowrap; }
.apps-row { display: flex; align-items: center; height: 46px; gap: 20px; }
.app { width: 24px; height: 24px; overflow: visible; }
.search { width: 220px; height: 32px; border-radius: 16px; background: #3d3d3d; border: 1px solid #4b4b4b; border-top-color: #666; margin: 0 -8px; display: flex; align-items: center; padding-left: 11px; font-size: 13.5px; color: #d6d6d6; }
.search span { margin-left: 9px; letter-spacing: -.25px; }
.art { margin-left: auto; border-radius: 13px; }
.app-active { width: 40px; height: 40px; margin: 0 -8px; border-radius: 5px; background: #2d2d2d; border: 1px solid #363636; display: grid; place-items: center; position: relative; }
.app-active b { position: absolute; right: 2px; top: 2px; width: 16px; height: 16px; border-radius: 50%; background: #c2185b; font: 10px/16px "Open Sans", sans-serif; text-align: center; }
.app-active::after { content: ""; position: absolute; left: 12px; bottom: 0; width: 16px; height: 3px; border-radius: 2px; background: #a3a29a; }
svg.run { height: 36px; padding: 6px 0; background: radial-gradient(circle 3px at 50% 34px, #9a9a9a 90%, transparent) no-repeat; }
.tray { margin-left: auto; display: flex; align-items: center; height: 47px; padding-right: 19px; }
.tray svg:nth-child(2) { margin-left: 18px; }
.tray svg:nth-child(3) { margin-left: 15px; }
.tray svg:nth-child(4) { margin-left: 16px; }
.eng { margin-left: 17px; width: 25px; letter-spacing: -.1px; }
.tray .wifi { margin-left: 17px; }
.wifi ~ svg { margin-left: 8px; }
.clock { width: 65px; text-align: right; line-height: 16px; letter-spacing: -.2px; white-space: nowrap; }
```
